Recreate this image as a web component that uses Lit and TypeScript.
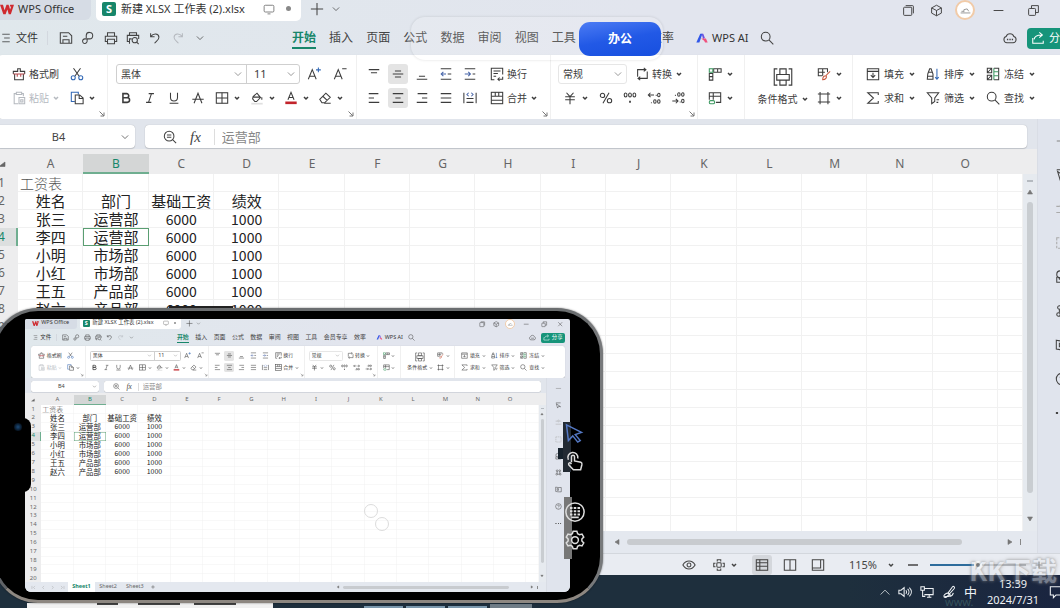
import { LitElement, html, svg, css, nothing, type TemplateResult } from "lit";
import { customElement, property } from "lit/decorators.js";
import { classMap } from "lit/directives/class-map.js";

/* Icon shapes on a 16 x 16 grid, stroked in the current text colour. */
const shapes: Record<string, TemplateResult> = {
  wps: svg`<path d="M0 3h3.400l1.800 6.500L7.400 3h2.400l1.800 5.500L12.800 5H11l.7-2H16l-3.600 11H10L8.400 8.500 6.400 14H3.800Z" fill="#cf2a30" stroke="none"/>`,
  monitor: svg`<path d="M3 3h10a1.500 1.500 0 0 1 1.500 1.500v6A1.500 1.500 0 0 1 13 12H3a1.500 1.500 0 0 1-1.500-1.500v-6A1.500 1.500 0 0 1 3 3ZM6 14.500h4"/>`,
  plus: svg`<path d="M8 1v14M1 8h14"/>`,
  minus: svg`<path d="M2 8h12"/>`,
  boldplus: svg`<path d="M8 1v14M1 8h14" stroke-width="2.400"/>`,
  boldminus: svg`<path d="M0 8h16" stroke-width="2.400"/>`,
  down: svg`<path d="m3 5.500 5 5 5-5"/>`,
  caret: svg`<path d="m4 6 4 4 4-4" stroke-width="3"/>`,
  up: svg`<path d="m1 12 7-7 7 7"/>`,
  tabs: svg`<rect x="2" y="4" width="10" height="10" rx="1"/><path d="M4.500 2H13a1 1 0 0 1 1 1v8.500"/>`,
  cube: svg`<path d="m8 1.500 6 3.300v6.400L8 14.500l-6-3.300V4.800ZM2 4.800l6 3.200 6-3.200M8 8v6.500"/>`,
  restore: svg`<rect x="2" y="5.500" width="8.500" height="8.500" rx="1"/><path d="M5.500 5.500V2H14v8.500h-3.500"/>`,
  close: svg`<path d="m3 3 10 10M13 3 3 13"/>`,
  menu: svg`<path d="M2 2h12M5 8h9M2 14h12"/>`,
  save: svg`<path d="M1.500 2h9.500l3.500 3.500V14h-13ZM4.500 14v-4h7v4M4.500 6h5"/>`,
  sharepath: svg`<path d="M6 8V5a3.700 3.700 0 1 1 3.700 4H4.500A2.600 2.600 0 1 0 7 11.500V9"/>`,
  print: svg`<path d="M4 6V2h8v4M4 12H1.500V6h13v6H12M4 9.500h8v5H4Z"/>`,
  preview: svg`<path d="M4 5V2h8v3M4 12H1.500V5h13v4M4 14.500V9h2.500"/><circle cx="10" cy="10.500" r="3"/><path d="m12.200 12.700 2.300 2.300"/>`,
  undo: svg`<path d="M3 2.500v4h4.500M3.300 6.200C6 2.500 12 2.500 12.500 7c.3 3-2.500 4-5 7"/>`,
  redo: svg`<path d="M13 2.500v4H8.500M12.700 6.200C10 2.500 4 2.500 3.500 7c-.3 3 2.500 4 5 7"/>`,
  search: svg`<circle cx="6.500" cy="6.500" r="5"/><path d="m10.200 10.200 5 5"/>`,
  cloud: svg`<path d="M4.500 13.500a3.700 3.700 0 0 1-.9-7.200 4.600 4.600 0 0 1 8.800 0 3.700 3.700 0 0 1-.9 7.200Z"/><path d="M4.500 9.700h1.500M7.300 9.700h1.500M10 9.700h1.500" stroke-width="1.800"/>`,
  share: svg`<path d="M2 8v6h12v-3M3.500 9.500C4 6 7 4.500 12 4.500M9.500 1.500l3.500 3-3.500 3"/>`,
  ai: svg`<path d="M1.500 13 6 3h2.500L5 13Z" fill="#3157e8" stroke="none"/><path d="M7.500 3h2l1.800 5-2 1Z" fill="#6a52e0" stroke="none"/><path d="M7 8.500h5.500l2 4.500h-3l-1-2Z" fill="#f0507d" stroke="none"/>`,
  brush: svg`<path d="M1.500 8V5H6.500V2h3v3h5v3M3 8v6.500h10V8"/><path d="M1.500 8h13M6 8v3M10 8v3" stroke="#b5484d"/>`,
  cut: svg`<path d="m4 1.500 6.500 9M12 1.500l-6.500 9"/><g stroke="#3268b5"><circle cx="3.700" cy="12.300" r="2.300"/><circle cx="12.300" cy="12.300" r="2.300"/></g>`,
  paste: svg`<path d="M5 3H2.500v11.500H7M11 3h2v3M5 1.500h6V4H5ZM8 7.500h6.500v7H8ZM10 10h2.500v2.500H10Z"/>`,
  copy: svg`<path d="M5.500 12H1.500V1.500h8V4" stroke="#3268b5"/><path d="M6 4.500h5L15 8v6.500H6ZM10.500 5v3.500H15"/>`,
  bold: svg`<path d="M4.500 3h4.200a2.300 2.300 0 0 1 0 4.800H4.500ZM4.500 7.800h5a2.600 2.600 0 0 1 0 5.200h-5Z" stroke-width="1.800"/>`,
  italic: svg`<path d="M6.500 3h6M3.500 13h6M9.700 3 6.300 13"/>`,
  underline: svg`<path d="M4 2v5.500a4 4 0 0 0 8 0V2M3 14h10"/>`,
  strike: svg`<path d="M3.500 14 8 2.500 12.500 14M1.500 9.500h13"/>`,
  border: svg`<rect x="1.500" y="2" width="13" height="12"/><path d="M8 2v12M1.500 8h13"/>`,
  bucket: svg`<path d="m3.500 6.500 4.500-4 4 5-4.500 4.500h-2L3 9ZM4 7h7.500M13.500 7v3"/><path d="M1.500 14.500h13" stroke="#e0e0e0" stroke-width="2"/>`,
  color: svg`<path d="M4.500 10 8 1.500 11.500 10M5.700 7.500h4.600"/><path d="M1.500 13.500h13" stroke="#c2242b" stroke-width="3"/>`,
  eraser: svg`<path d="M2 9.500 9 2.500l5 4.700-6.500 6.300h-3ZM5.500 6l5 4.700M7 14h7.500"/>`,
  grow: svg`<path d="M1.500 14 6 3l4.500 11M3.200 10.500h5.600"/><path d="M13 .5V6M10.300 3.300h5.500" stroke="#3268b5"/>`,
  shrink: svg`<path d="M1.500 14 6 3l4.500 11M3.200 10.500h5.600M10.500 2h5"/>`,
  top: svg`<path d="M2 3h12M4.500 6.500h7"/>`,
  middle: svg`<path d="M4.500 4.500h7M2 8h12M4.500 11.500h7"/>`,
  bottom: svg`<path d="M4.500 10.500h7M2 14h12"/>`,
  outdent: svg`<path d="M2 2h12M2 14h12M10 8h4"/><path d="M8 8H2.500M5 5.500 2.500 8 5 10.500" stroke="#4664a8"/>`,
  indent: svg`<path d="M2 2h12M2 14h12M11 8h3"/><path d="M2 8h6.500M6 5.500 8.500 8 6 10.500" stroke="#4664a8"/>`,
  wrap: svg`<path d="M5 14.500H1.500v-13h13v7M4 4.500h8M4 7.500h5M4 10.500h3M14.500 11v3H9m2-2-2 2 2 2"/>`,
  left: svg`<path d="M2 3h11M2 8h6M2 13h12"/>`,
  center: svg`<path d="M2 3h12M5 8h6M2 13h12"/>`,
  right: svg`<path d="M3 3h11M8 8h6M2 13h12"/>`,
  justify: svg`<path d="M2 3h12M2 8h12M2 13h12"/>`,
  spread: svg`<path d="M1 2v12M15 2v12M4 8.500h8M4 13h8"/><path d="M6.500 2 4.500 4l2 2M9.500 2l2 2-2 2" stroke="#4664a8"/>`,
  merge: svg`<rect x="1.500" y="1.500" width="13" height="13"/><path d="M1.500 6h13M6 1.500V6M10 1.500V6M1.500 10.500h13"/>`,
  convert: svg`<path d="M3 11V3h9M10 1l2.500 2L10 5M14 5v8H4M6 11l-2.500 2L6 15"/>`,
  yen: svg`<path d="m4 2 4 4.500L12 2M2.500 6.500h11M2.500 10h11M8 6.500V15"/>`,
  percent: svg`<circle cx="4" cy="5" r="2.500"/><circle cx="12" cy="11" r="2.500"/><path d="m11.500 2-7 12"/>`,
  thousands: svg`<ellipse cx="3" cy="4.500" rx="1.600" ry="2.300"/><ellipse cx="8" cy="4.500" rx="1.600" ry="2.300"/><ellipse cx="13" cy="4.500" rx="1.600" ry="2.300"/><path d="M8 11v2.500" stroke-width="2"/>`,
  lessdec: svg`<path d="M8 4.500H1.500M4 2 1.500 4.500 4 7M10 5h1"/><ellipse cx="13.500" cy="4.500" rx="1.400" ry="2"/><ellipse cx="9" cy="12" rx="1.400" ry="2"/><ellipse cx="13.500" cy="12" rx="1.400" ry="2"/><path d="M4.500 13.500h1"/>`,
  moredec: svg`<ellipse cx="9" cy="4" rx="1.400" ry="2"/><ellipse cx="13.500" cy="4" rx="1.400" ry="2"/><path d="M4.500 5h1M1.500 11.500H8M5.500 9 8 11.500 5.500 14M10 12.500h1"/><ellipse cx="13.500" cy="11.500" rx="1.400" ry="2"/>`,
  rowcol: svg`<path d="M6.500 2h8.500v4H6.500ZM11 2v4M1.500 7.500V15h4V7.500ZM1.500 11h4"/><rect x="1.500" y="2" width="4" height="4" stroke="#3f9a63"/>`,
  tablestyle: svg`<path d="M1.500 10V2h13v11H9M1.500 6h13M6 2v8"/><rect x="1.500" y="11" width="6" height="3.500" rx="1.500" stroke="#3f9a63"/>`,
  conditional: svg`<path d="M3.500 1.500H1v13h2.500M12.500 1.500H15v13h-2.500M5.500 1.500h5V6h-5ZM3 6h10v4.500H3ZM5.500 10.500h5v4h-5Z"/>`,
  cellstyle: svg`<path d="M6 10H1.500V2H12v4M1.500 6H9M6.500 2v8"/><path d="m15 5-5 5M6.500 14.500c0-3 1.500-4.500 4-4.500 1 2-.5 4.500-4 4.500Z" stroke="#c9583f"/>`,
  frame: svg`<path d="M3.500 1v14M12.500 1v14M1 3.500h14M1 12.500h14"/>`,
  fill: svg`<path d="M1.500 2h13v12.500h-13ZM1.500 5h13M8 6.500v5M5.500 9.300 8 12l2.500-2.700"/>`,
  sort: svg`<path d="M2 8 4.200 2h1.600L8 8v6H1.500ZM3 6h4M2 10.500h6"/><path d="M12.500 2v12M10.500 11.500l2 2.500 2-2.500" stroke="#3268b5"/>`,
  freeze: svg`<path d="M1.500 1.500h5v5h-5ZM1.500 9.500h5v5h-5ZM2 6l4-4M2 14l4-4M9 1.500h5.500v13H9"/><path d="M9 5.500h5M9 10h5M9 1.500v13" stroke="#3f9a63"/>`,
  sum: svg`<path d="M14 4.500V2H2l6.500 6L2 14h12v-2.500"/>`,
  filter: svg`<path d="M1.500 2h13L10 8v4l-3.500 2.500V8ZM12 10h3M12 13h2"/>`,
  launcher: svg`<path d="m3 3 9 9M12 5v7H5" stroke-width="2"/>`,
  zoomfx: svg`<circle cx="7" cy="7" r="5.500"/><path d="m11 11 4 4M4.500 5.700h5M4.500 8.300h5"/>`,
  eye: svg`<path d="M1 8c3.500-6 10.500-6 14 0-3.500 6-10.500 6-14 0Z"/><circle cx="8" cy="8" r="2.200"/>`,
  focus: svg`<rect x="5.500" y="5.500" width="5" height="5" rx="1"/><path d="M6 4V2h4v2M6 12v2h4v-2M4 6H2v4h2M12 6h2v4h-2"/>`,
  normal: svg`<rect x="1.500" y="2" width="13" height="12"/><path d="M1.500 5.500h13M1.500 9.500h13M5.500 2v12"/>`,
  pages: svg`<path d="M1.500 2h13v12h-13ZM8 2v12"/>`,
  page: svg`<path d="M1.500 2h13v12h-13ZM1.500 11.500H11V2"/>`,
  cursor: svg`<path d="M2 2h11M3 4l3 10 2.500-4 4.500 1Z"/>`,
  sliders: svg`<circle cx="8" cy="4.500" r="2"/><path d="M1.500 5h4M10.500 5h4M1.500 12h13"/>`,
  select: svg`<path d="M2 2h12v12H2Z" stroke-dasharray="3 1.500"/>`,
  person: svg`<circle cx="6" cy="5" r="4"/><path d="M2 8v6h11V9M5 8v3"/>`,
  nodes: svg`<circle cx="5" cy="4" r="2"/><circle cx="11" cy="4" r="2"/><circle cx="4" cy="12" r="2"/><circle cx="12" cy="12" r="2"/><path d="M5 6v4M11 6v4M6 12h4"/>`,
  image: svg`<path d="M1.500 2.500 7 3.500h7.500v10H7l-5.500-1ZM5 6h3v4H5Z"/>`,
  help: svg`<circle cx="8" cy="8" r="6.500"/><path d="M6 6.500c0-2.700 4-2.500 4 0C10 8 8 8 8 9.500M8 11v1"/>`,
  more: svg`<path d="M1 8h2.500M7 8h2M12 8h2" stroke-width="2.500"/>`,
  triup: svg`<path d="m8 4 5 8H3Z" fill="currentColor"/>`,
  tridown: svg`<path d="m8 12 5-8H3Z" fill="currentColor"/>`,
  trileft: svg`<path d="m4 8 8-5v10Z" fill="currentColor"/>`,
  triright: svg`<path d="m12 8-8-5v10Z" fill="currentColor"/>`,
  corner: svg`<path d="M14 4v9H2Z" fill="currentColor"/>`,
  first: svg`<path d="M3 3v10M13 3 8 8l5 5"/>`,
  prev: svg`<path d="M10 3 5 8l5 5"/>`,
  next: svg`<path d="m6 3 5 5-5 5"/>`,
  last: svg`<path d="M13 3v10M3 3l5 5-5 5"/>`,
  speaker: svg`<path d="M1 6h2.500L7 3v10l-3.500-3H1ZM9 6c1 1 1 3 0 4M11 4.500c2 2 2 5 0 7M13 3c3 3 3 7 0 10"/>`,
  network: svg`<path d="M5 4h10v7H5M8 14h5M10.500 11v3M1 2h4v4H1ZM3 6v7h3"/>`,
  pen: svg`<path d="M2 14c2-1 3-1 5-1s3-2 1.500-3S5 9 3 11s0 4 2 3L14 4c1-2-1-3-2-2L7 9M9 13c2 0 3-1 4-4"/>`,
  note: svg`<path d="M1.500 2h13v9.500H8L5 14.500v-3H1.500Z"/>`,
  arrow: svg`<path d="m2 1.500 12 6-5 1.800L13 14l-2 1.300-4-5L3.500 14Z"/>`,
  hand: svg`<path d="M6 9V4.500a1.200 1.200 0 0 1 2.400 0V8l5.100 1c1 .3 1 1 .8 2l-1 4H7.500L3.800 11c-.5-1.300.7-2 1.500-1.300L6 10.500M3.500 7A4 4 0 1 1 11 6"/>`,
  keys: svg`<circle cx="8" cy="8" r="7.300"/><path d="M4 4.800h2M7 4.800h2M10 4.800h2M4 7.400h2M7 7.400h2M10 7.400h2M4 10h2M7 10h2M10 10h2M5 12.300h6" stroke-width="1.500"/>`,
  gear: svg`<circle cx="8" cy="8" r="2.700"/><path d="m6.500 1-.6 2-1.500.8-2-.5L1 5.700l1.500 1.500v1.600L1 10.300l1.400 2.400 2-.5 1.500.8.600 2h3l.6-2 1.500-.8 2 .5 1.400-2.400-1.500-1.500V7.200L15 5.700l-1.400-2.400-2 .5-1.500-.8-.6-2Z"/>`,
};

const icon = (name: string, size = "m") =>
  html`<svg class="i ${size}" viewBox="0 0 16 16" aria-hidden="true">${shapes[name]}</svg>`;

const shared = css`
  * { box-sizing: border-box; }
  .i { display: block; flex: none; width: 14px; height: 14px; fill: none; stroke: currentColor; stroke-width: 1.2; overflow: visible; }
  .i.xs { width: 8px; height: 8px; }
  .i.s { width: 10px; height: 10px; }
  .i.l { width: 20px; height: 20px; }
  .i.thin { width: 20px; height: 20px; stroke-width: 0.9; }
  button, input, select { font: inherit; color: inherit; background: none; border: 0; margin: 0; padding: 0; }
  button { display: inline-flex; align-items: center; justify-content: center; white-space: nowrap; }
`;

const sheetRows = [
  ["姓名", "部门", "基础工资", "绩效"],
  ["张三", "运营部", "6000", "1000"],
  ["李四", "运营部", "6000", "1000"],
  ["小明", "市场部", "6000", "1000"],
  ["小红", "市场部", "6000", "1000"],
  ["王五", "产品部", "6000", "1000"],
  ["赵六", "产品部", "6000", "1000"],
];
const letters = "ABCDEFGHIJKLMNO".split("");

@customElement("office-window")
export class OfficeWindow extends LitElement {
  /* Set when the mode switch floats over the member tab. */
  @property({ type: Boolean }) overlaid = false;

  static styles = [shared, css`
    :host { display: flex; flex-direction: column; overflow: hidden; color: #444; font: 12px/16px "Noto Sans", "Noto Sans CJK SC", sans-serif; background: linear-gradient(90deg, #e0e8ec, #e2e5ee 60%); }
    .title { display: flex; height: 21px; flex: none; padding-right: 2px; font-size: 11px; }
    .home { display: flex; align-items: center; gap: 4px; width: 106px; height: 20px; padding: 0 0 3px 15px; background: #d6dce5; border-radius: 0 0 6px 0; color: #333; }
    .doc { display: flex; align-items: center; width: 205px; margin-left: 5px; padding: 0 10px 4px 6px; background: #fff; border-radius: 0 0 5px 5px; color: #333; white-space: nowrap; }
    .logo { width: 14px; height: 14px; margin-right: 5px; border-radius: 2px; background: #17866a; color: #fff; font-weight: 700; line-height: 14px; text-align: center; }
    .doc .i { margin-left: auto; color: #777; width: 12px; height: 12px; }
    .dot { width: 5px; height: 5px; margin-left: 11px; border-radius: 50%; background: #888; }
    .newtab { display: flex; align-items: center; gap: 7px; padding: 0 0 4px 9px; }
    .sys { display: grid; grid-template-columns: 28px 28px 30px 36px 34px 34px; margin-left: auto; height: 16px; }
    .sys .i { width: 13px; height: 13px; }
    .avatar { width: 20px; height: 20px; align-self: center; justify-self: center; border: 2px solid #f1cba8; border-radius: 50%; background: #fff; color: #999; }
    .menu { display: flex; align-items: center; flex: none; height: 34px; padding: 0 11px 0 16px; }
    .file { gap: 5px; color: #333; font-size: 11px; }
    .rule { width: 1px; height: 14px; margin: 0 7px 0 9px; background: #d3d8df; }
    .quick { display: flex; justify-content: space-between; width: 156px; }
    .quick button { width: 22px; }
    .off { color: #b5b9bf; }
    .nav { display: flex; justify-content: space-between; width: 382px; margin: 0 21px 0 81px; height: 22px; }
    .nav a { color: #444; text-decoration: none; line-height: 22px; white-space: nowrap; }
    .nav .on { color: #17866a; font-weight: 700; border-bottom: 2px solid #17866a; }
    .nav .covered { visibility: hidden; }
    .ai { gap: 3px; color: #333; font-size: 11px; margin-right: 11px; }
    .cloud { margin-left: auto; margin-right: 10px; }
    .share { gap: 4px; width: 48px; height: 21px; border-radius: 4px; background: #16947a; color: #fff; font-size: 11px; }
    .ribbon { display: flex; flex: none; height: 64px; margin: 0 11px 0 12px; border-radius: 5px; background: #fff; box-shadow: 0 1px 2px #0003; font-size: 10px; color: #3c3c3c; }
    .group { padding-top: 7px; border-right: 1px solid #f0f0f0; flex: none; }
    .group:last-child { border: 0; }
    .row { display: grid; height: 24px; align-items: center; }
    .row > button { height: 20px; border-radius: 3px; }
    .active { background: #e4e4e4; width: 20px; justify-self: center; }
    .lab { gap: 3px; justify-self: start; }
    .end { display: flex; justify-content: flex-end; padding-right: 1px; color: #777; }
    .g1 { width: 111px; } .g1 .row { grid-template-columns: 58px auto; padding-left: 15px; justify-items: start; }
    .g2 { width: 249px; } .g2 .fonts { grid-template-columns: 184px 24px 24px; column-gap: 2px; padding-left: 8px; }
    .g2 .marks { grid-template-columns: repeat(4, 24px) 36px repeat(3, 34px); padding-left: 6px; }
    .g3 { width: 194px; } .g3 .row { grid-template-columns: repeat(5, 24px) auto; padding-left: 5px; }
    .g3 .lab { margin-left: 8px; }
    .g4 { width: 147px; } .g4 .row { grid-template-columns: 69px auto; column-gap: 8px; padding-left: 7px; }
    .g4 .nums { grid-template-columns: 36px repeat(4, 24px); column-gap: 0; }
    .g5 { width: 47px; }
    .g6 { width: 108px; display: flex; padding-left: 9px; }
    .tall { flex-direction: column; width: 58px; height: 48px; justify-content: space-between; padding-top: 5px; }
    .tall span { display: flex; align-items: center; gap: 3px; height: 22px; }
    .g6 .pair { width: 36px; }
    .g7 .row { grid-template-columns: repeat(3, 60px); padding-left: 13px; }
    .g7 .lab { gap: 4px; }
    .combo { display: flex; height: 20px; border: 1px solid #cfcfcf; border-radius: 3px; }
    .pick { display: flex; align-items: center; flex: 1; min-width: 0; padding: 0 3px 0 4px; }
    .pick + .pick { flex: none; width: 53px; padding-left: 7px; border-left: 1px solid #cfcfcf; font-size: 11px; }
    .pick select { flex: 1; min-width: 0; appearance: none; }
    .pick .i { color: #777; }
    .light { border-color: #e6e6e6; }
    .middle { display: flex; flex: 1; min-height: 0; }
    .main { display: flex; flex-direction: column; flex: 1; min-width: 0; }
    .formula { display: flex; flex: none; gap: 10px; height: 35px; padding: 6px 10px 6px 12px; background: linear-gradient(#e1e5ec 30px, #ededee 30px); }
    .box { display: flex; align-items: center; background: #fff; border-radius: 4px; box-shadow: 0 0 1px #0004, 0 1px 1px #0002; }
    .name { width: 138px; padding-right: 5px; }
    .name input { flex: 1; min-width: 0; text-align: center; font-size: 11px; }
    .expr { flex: 1; padding-left: 18px; gap: 13px; }
    .fx { font: italic 15px/16px "Liberation Serif", serif; }
    .expr input { flex: 1; padding-left: 7px; border-left: 1px solid #ddd; color: #888; font-size: 13px; height: 16px; }
    .area { display: flex; flex: 1; min-height: 0; overflow: hidden; background: #ededee; align-items: stretch; }
    .clip { flex: 1; min-width: 0; overflow: hidden; }
    table { width: 100%; table-layout: fixed; border-collapse: separate; border-spacing: 0; background: #fff; color: #222; }
    .ch { width: 33px; } .cp { width: 25px; }
    th { height: 18px; padding: 0; background: #ededee; color: #666; font: 12px/16px "Noto Sans", sans-serif; }
    thead th { height: 20px; }
    thead .on { background: #d4d6d6; color: #17866a; box-shadow: inset 0 -2px #6fae90; }
    tbody .on { background: #dcdfdf; color: #17866a; box-shadow: inset -2px 0 #6fae90; }
    thead .i { margin-left: 13px; }
    td { height: 18px; padding: 0; box-shadow: inset -1px -1px #f1f1f1; text-align: center; font: 15px/16px "Noto Sans CJK SC", sans-serif; white-space: nowrap; overflow: visible; }
    td.num { font-size: 14px; }
    td.cap { text-align: left; padding-left: 2px; font-size: 14px; font-weight: 300; color: #555; }
    td.sel { box-shadow: inset 0 0 0 1px #5a9e72; }
    .vbar { display: flex; flex-direction: column; align-items: center; flex: none; width: 14px; margin-top: 20px; padding: 6px 0 8px; gap: 6px; background: #e6eaef; color: #777; }
    .vbar::before { content: ""; width: 6px; height: 2px; background: #b5bac0; }
    .vthumb { flex: 1; width: 6px; margin-bottom: 16px; border-radius: 3px; background: #c9cdd1; }
    .sheets { display: flex; align-items: center; flex: none; height: 22px; padding-left: 10px; color: #666; background: #e4e8ef; font-size: 11px; }
    .steps { display: flex; gap: 9px; width: 77px; padding-left: 3px; color: #999; }
    .sheets button { width: 54px; height: 22px; }
    .sheets .on { background: #fff; color: #17866a; font-weight: 700; }
    .sheets .add { width: 20px; }
    .hbar { display: flex; align-items: center; flex: none; width: 424px; margin-left: auto; gap: 6px; padding-right: 16px; color: #777; }
    .hthumb { width: 335px; height: 6px; border-radius: 3px; background: #c8cbcf; margin-right: auto; }
    .hbar::after { content: ""; width: 1px; height: 6px; background: #888; }
    .side { display: flex; flex-direction: column; align-items: center; gap: 20px; flex: none; width: 49px; padding-top: 15px; background: #e0e4ed; border-left: 1px solid #d9dde5; }
    .side button { height: 14px; }
    .side .dash { height: 14px; display: flex; align-items: center; color: #888; }
    .side .off { color: #aaa; }
    .status { display: flex; align-items: center; flex: none; height: 22px; padding-right: 43px; border-top: 1px solid #d3d7dd; background: #e9ecf2; justify-content: flex-end; }
    .status button { height: 20px; }
    .views { display: flex; gap: 8px; margin: 0 21px 0 14px; }
    .views button { width: 20px; border-radius: 3px; }
    .views .on { background: #d4d7dc; }
    .look { display: flex; gap: 16px; }
    .split { gap: 4px; }
    .percent { gap: 10px; margin-right: 13px; font-size: 11px; }
    .range { width: 96px; height: 12px; margin: 0 9px 0 12px; appearance: none; }
    .range::-webkit-slider-runnable-track { height: 2px; background: linear-gradient(90deg, #2d6c9c 50%, #b4b8be 50%); }
    .range::-webkit-slider-thumb { appearance: none; width: 8px; height: 8px; margin-top: -3px; border: 2px solid #fff; border-radius: 50%; background: #777; }
  `];

  private tool(name: string, label: string, cls = "") {
    return html`<button class=${cls} aria-label=${label}>${icon(name)}</button>`;
  }
  private split(name: string, label: string) {
    return html`<button class="split" aria-label=${label}>${icon(name)}${icon("caret", "xs")}</button>`;
  }
  private labelled(name: string, text: string, caret = true, cls = "") {
    return html`<button class="lab ${cls}">${icon(name)}<span>${text}</span>${caret ? icon("caret", "xs") : nothing}</button>`;
  }
  private pick(label: string, value: string) {
    return html`<label class="pick"><select aria-label=${label}><option>${value}</option></select>${icon("down", "s")}</label>`;
  }
  private end() {
    return html`<div class="end">${icon("launcher", "xs")}</div>`;
  }

  private renderTitle() {
    return html`<header class="title">
      <div class="home">${icon("wps")}<span>WPS Office</span></div>
      <div class="doc"><span class="logo">S</span><span>新建 XLSX 工作表 (2).xlsx</span>${icon("monitor")}<span class="dot"></span></div>
      <div class="newtab">${this.tool("plus", "新建")}${icon("down", "s")}</div>
      <div class="sys">
        ${this.tool("tabs", "窗口")}${this.tool("cube", "应用")}
        <button class="avatar" aria-label="账号"><svg class="i" viewBox="0 0 16 16"><path d="M2 11h12M3 9h3M6 10V7l4-1 2 3"/></svg></button>
        ${this.tool("minus", "最小化")}${this.tool("restore", "还原")}${this.tool("close", "关闭")}
      </div>
    </header>`;
  }

  private renderMenu() {
    const tabs = ["开始", "插入", "页面", "公式", "数据", "审阅", "视图", "工具", "会员专享", "效率"];
    return html`<div class="menu">
      <button class="file">${icon("menu", "s")}<span>文件</span></button><span class="rule"></span>
      <div class="quick">
        ${this.tool("save", "保存")}${this.tool("sharepath", "输出")}${this.tool("print", "打印")}${this.tool("preview", "打印预览")}
        ${this.tool("undo", "撤销")}${this.tool("redo", "恢复", "off")}<button aria-label="更多">${icon("down", "s")}</button>
      </div>
      <nav class="nav">${tabs.map((t, n) => html`<a href="#" class=${classMap({ on: n === 0, covered: this.overlaid && n === 8 })}>${t}</a>`)}</nav>
      <button class="ai">${icon("ai")}<span>WPS AI</span></button>
      ${this.tool("search", "搜索")}
      ${this.tool("cloud", "云", "cloud")}
      <button class="share">${icon("share")}<span>分享</span></button>
    </div>`;
  }

  private renderRibbon() {
    return html`<div class="ribbon">
      <div class="group g1">
        <div class="row">${this.labelled("brush", "格式刷", false)}${this.tool("cut", "剪切")}</div>
        <div class="row">${this.labelled("paste", "粘贴", true, "off")}${this.split("copy", "复制")}</div>
        ${this.end()}
      </div>
      <div class="group g2">
        <div class="row fonts"><div class="combo">${this.pick("字体", "黑体")}${this.pick("字号", "11")}</div>${this.tool("grow", "增大字号")}${this.tool("shrink", "减小字号")}</div>
        <div class="row marks">${this.tool("bold", "加粗")}${this.tool("italic", "倾斜")}${this.tool("underline", "下划线")}${this.tool("strike", "删除线")}
          ${this.split("border", "边框")}${this.split("bucket", "填充颜色")}${this.split("color", "字体颜色")}${this.split("eraser", "清除")}</div>
        ${this.end()}
      </div>
      <div class="group g3">
        <div class="row">${this.tool("top", "顶端对齐")}${this.tool("middle", "垂直居中", "active")}${this.tool("bottom", "底端对齐")}${this.tool("outdent", "减少缩进")}${this.tool("indent", "增加缩进")}${this.labelled("wrap", "换行", false)}</div>
        <div class="row">${this.tool("left", "左对齐")}${this.tool("center", "居中", "active")}${this.tool("right", "右对齐")}${this.tool("justify", "两端对齐")}${this.tool("spread", "分散对齐")}${this.labelled("merge", "合并")}</div>
        ${this.end()}
      </div>
      <div class="group g4">
        <div class="row"><div class="combo light">${this.pick("数字格式", "常规")}</div>${this.labelled("convert", "转换")}</div>
        <div class="row nums">${this.split("yen", "货币")}${this.tool("percent", "百分比")}${this.tool("thousands", "千位分隔")}${this.tool("lessdec", "减少小数")}${this.tool("moredec", "增加小数")}</div>
        ${this.end()}
      </div>
      <div class="group g5"><div class="row">${this.split("rowcol", "行和列")}</div><div class="row">${this.split("tablestyle", "表格样式")}</div></div>
      <div class="group g6">
        <button class="tall">${icon("conditional", "thin")}<span>条件格式${icon("caret", "xs")}</span></button>
        <div class="pair"><div class="row">${this.split("cellstyle", "单元格样式")}</div><div class="row">${this.split("frame", "工作表")}</div></div>
      </div>
      <div class="group g7">
        <div class="row">${this.labelled("fill", "填充")}${this.labelled("sort", "排序")}${this.labelled("freeze", "冻结")}</div>
        <div class="row">${this.labelled("sum", "求和")}${this.labelled("filter", "筛选")}${this.labelled("search", "查找")}</div>
      </div>
    </div>`;
  }

  private renderRow(n: number) {
    const values = n === 1 ? ["工资表"] : sheetRows[n - 2] ?? [];
    return html`<tr>
      <th scope="row" class=${classMap({ on: n === 4 })}>${n}</th>
      ${letters.map((_, c) => {
        const v = values[c] ?? "";
        return html`<td class=${classMap({ cap: n === 1 && c === 0, num: /^\d/.test(v), sel: n === 4 && c === 1 })}>${v}</td>`;
      })}<td></td>
    </tr>`;
  }

  render() {
    return html`${this.renderTitle()}${this.renderMenu()}${this.renderRibbon()}
      <div class="middle">
        <div class="main">
          <div class="formula">
            <div class="box name"><input aria-label="名称框" .value=${"B4"}>${icon("down", "s")}</div>
            <div class="box expr">${icon("zoomfx")}<span class="fx">fx</span><input aria-label="编辑栏" .value=${"运营部"}></div>
          </div>
          <div class="area">
            <div class="clip"><table>
              <colgroup><col class="ch">${letters.map(() => html`<col>`)}<col class="cp"></colgroup>
              <thead><tr><th>${icon("corner", "xs")}</th>${letters.map((l) => html`<th scope="col" class=${classMap({ on: l === "B" })}>${l}</th>`)}<th></th></tr></thead>
              <tbody>${Array.from({ length: 40 }, (_, k) => this.renderRow(k + 1))}</tbody>
            </table></div>
            <div class="vbar">${icon("triup", "xs")}<span class="vthumb"></span>${icon("tridown", "xs")}</div>
          </div>
          <div class="sheets">
            <div class="steps">${["first", "prev", "next", "last"].map((s) => icon(s, "s"))}</div>
            ${["Sheet1", "Sheet2", "Sheet3"].map((s, n) => html`<button class=${classMap({ on: n === 0 })}>${s}</button>`)}
            <button class="add" aria-label="新建工作表">${icon("boldplus", "xs")}</button>
            <div class="hbar">${icon("trileft", "xs")}<span class="hthumb"></span>${icon("triright", "xs")}</div>
          </div>
        </div>
        <aside class="side">
          <span class="dash">${icon("minus")}</span>
          ${this.tool("cursor", "选择")}${this.tool("sliders", "属性", "off")}${this.tool("select", "选区", "off")}${this.tool("person", "助手")}
          ${this.tool("nodes", "分析")}${this.tool("image", "图库")}${this.tool("help", "帮助")}${this.tool("more", "更多")}
        </aside>
      </div>
      <footer class="status">
        <div class="look">${this.tool("eye", "阅读")}${this.split("focus", "聚焦")}</div>
        <div class="views">${this.tool("normal", "普通视图", "on")}${this.tool("pages", "分页预览")}${this.tool("page", "页面布局")}</div>
        <button class="percent"><span>115%</span>${icon("caret", "xs")}</button>
        <button aria-label="缩小">${icon("boldminus", "s")}</button>
        <input class="range" type="range" aria-label="缩放" value="50">
        <button aria-label="放大">${icon("boldplus", "xs")}</button>
      </footer>`;
  }
}

@customElement("phone-mirror")
export class PhoneMirror extends LitElement {
  static styles = [shared, css`
    :host { display: block; box-sizing: border-box; padding: 8px 30px; border: 3px solid; border-color: #6b6e70 #77797b #8d8781 #606367; border-radius: 46px; background: #000; box-shadow: 0 0 2px #0008; }
    .screen { position: relative; height: 273px; }
    .view { height: 100%; overflow: hidden; border-radius: 2px 2px 6px 6px; }
    office-window { zoom: 0.495; width: 100%; height: 575px; }
    .key { position: absolute; left: 144px; top: -13px; width: 64px; height: 2px; background: #222; }
    .notch { position: absolute; left: -6px; top: 99px; width: 12px; height: 74px; border-radius: 0 8px 8px 0; background: #000; }
    .lens { position: absolute; left: -11px; top: 104px; width: 8px; height: 8px; border-radius: 50%; background: radial-gradient(#1c4a78, #06121f 70%); }
    .dock { position: absolute; right: -16px; display: flex; flex-direction: column; gap: 6px; padding-right: 1px; color: #ddd; }
    .dock button { width: 22px; height: 22px; }
    .pointer { top: 103px; background: linear-gradient(90deg, #222a33 8px, #0000 8px); }
    .tools { top: 178px; padding: 4px 0 8px; background: linear-gradient(90deg, #777 8px, #0000 8px); }
    .blue { color: #5478c4; }
    .tag { position: absolute; right: 5px; top: 129px; width: 7px; height: 11px; background: #16222c; }
    .ring { position: absolute; width: 14px; height: 14px; border: 1px solid #dcdcdc; border-radius: 50%; left: 339px; top: 185px; }
    .ring.b { left: 350px; top: 198px; }
  `];
  render() {
    return html`<div class="screen">
      <div class="view"><office-window></office-window></div>
      <span class="key"></span><span class="notch"></span><span class="lens"></span><span class="ring"></span><span class="ring b"></span><span class="tag"></span>
      <div class="dock pointer"><button class="blue" aria-label="鼠标">${icon("arrow", "l")}</button><button aria-label="触控">${icon("hand", "l")}</button></div>
      <div class="dock tools"><button aria-label="键盘">${icon("keys", "l")}</button><button aria-label="设置">${icon("gear", "l")}</button></div>
    </div>`;
  }
}

@customElement("app-root")
export class AppRoot extends LitElement {
  static styles = [shared, css`
    :host { position: relative; display: flex; flex-direction: column; height: 100vh; overflow: hidden; font: 12px/16px "Noto Sans", "Noto Sans CJK SC", sans-serif; }
    .desk { flex: 1; min-height: 0; width: calc(100% + 41px); margin-left: -15px; }
    .taskbar { display: flex; align-items: center; justify-content: flex-end; flex: none; height: 33px; padding-right: 22px; gap: 8px; background: linear-gradient(90deg, #1e2f3d 80%, #1a2540); color: #eef1f4; font-size: 11px; }
    .open { display: flex; align-items: flex-end; gap: 3px; align-self: flex-end; flex: none; margin: 0 auto 0 27px; }
    .peek { display: flex; align-items: flex-start; gap: 14px; width: 246px; height: 5px; margin-right: 88px; padding-left: 70px; background: #f1f1f1; }
    .peek i { width: 42px; height: 2px; background: #444; }
    .peek i:first-child { width: 21px; margin-right: 6px; }
    .app { width: 39px; height: 2px; background: #7b98ad; }
    .app.now { width: 42px; height: 4px; background: #6f7c86; }
    .clock { width: 56px; text-align: center; }
    .ime { font-size: 13px; }
    .bell { margin-right: -25px; }
    .modes { position: absolute; left: 411px; top: 17px; display: flex; justify-content: flex-end; width: 252px; height: 43px; padding: 5px 2px; border-radius: 14px; background: #ffffff24; box-shadow: 0 0 3px #0002; }
    .modes button { width: 82px; height: 34px; border-radius: 11px; background: linear-gradient(170deg, #4c7cf4, #2259e6 50%, #174fdf); color: #fff; font-weight: 700; }
    .phone { position: absolute; left: -8px; top: 308px; width: 611px; }
    .mark { position: absolute; right: 3px; bottom: 24px; color: #e6e9ee; font: 700 26px/28px "Noto Sans CJK SC", sans-serif; text-shadow: 0 0 2px #777, 0 0 3px #777, 0 0 4px #888; opacity: 0.45; pointer-events: none; }
    .site { position: absolute; left: 945px; bottom: 0; color: #36525c; font-size: 11px; line-height: 13px; pointer-events: none; }
  `];
  render() {
    return html`<office-window class="desk" overlaid></office-window>
      <div class="taskbar">
        <div class="open"><span class="peek"><i></i><i></i><i></i></span><span class="app"></span><span class="app"></span><span class="app"></span><span class="app now"></span></div>
        ${icon("up", "s")}${icon("speaker")}${icon("network")}${icon("pen")}<span class="ime">中</span>
        <div class="clock"><div>13:39</div><div>2024/7/31</div></div>
        <span class="bell">${icon("note")}</span>
      </div>
      <div class="modes"><button>办公</button></div>
      <phone-mirror class="phone"></phone-mirror>
      <div class="mark">KK下载</div><div class="site">www.</div>`;
  }
}
